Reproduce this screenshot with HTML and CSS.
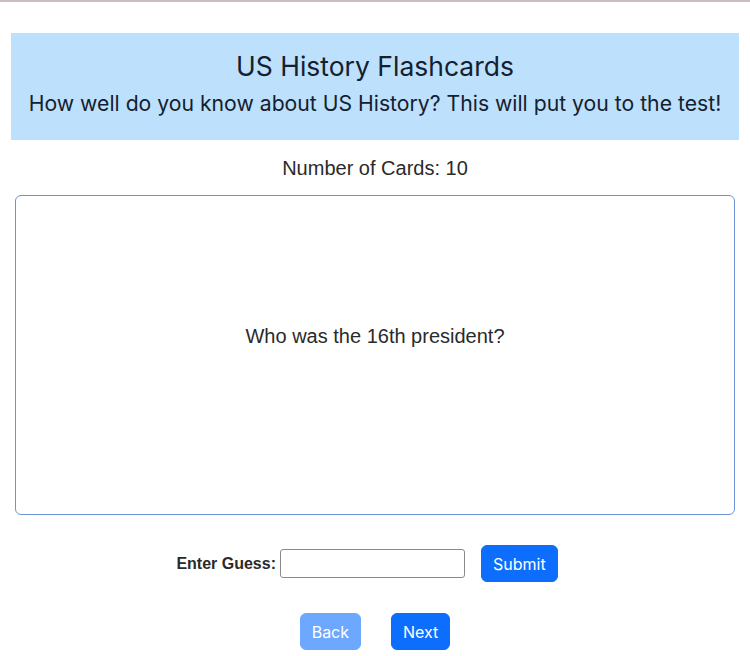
FILE: index.html
```html
<!DOCTYPE html>
<html>
<head>
<meta charset="utf-8">
<link rel="stylesheet" href="styles.css">
</head>
<body>
<div class="page">
  <header class="hero">
    <h1 class="title">US History Flashcards</h1>
    <p class="subtitle">How well do you know about US History? This will put you to the test!</p>
  </header>
  <p class="count">Number of Cards: 10</p>
  <div class="card">
    <p class="question">Who was the 16th president?</p>
  </div>
  <form class="guess">
    <label class="label" for="g">Enter Guess:</label>
    <input class="input" id="g" type="text">
    <button type="button" class="btn">Submit</button>
  </form>
  <div class="nav">
    <button type="button" class="btn btn-disabled">Back</button>
    <button type="button" class="btn">Next</button>
  </div>
</div>
</body>
</html>
```
FILE: styles.css
```css
* { box-sizing: border-box; }
html, body { margin: 0; padding: 0; background: #fff; }
body {
  font-family: Inter, "Liberation Sans", sans-serif;
  color: #212529;
  border-top: 2px solid #cbbcc3;
  height: 656px;
  overflow: hidden;
}
.page {
  padding: 31px 11px 0;
}
.hero {
  background: #bde0fd;
  height: 107px;
  padding-top: 17px;
  text-align: center;
  color: #14202e;
}
.title {
  margin: 0;
  font-size: 26.5px;
  font-weight: 400;
  line-height: 32px;
}
.subtitle {
  margin: 7px 0 0;
  font-size: 21.2px;
  line-height: 28px;
}
.count {
  margin: 15px 0 0;
  text-align: center;
  font-family: "Liberation Sans", Arial, sans-serif;
  font-size: 20px;
  line-height: 26px;
  color: #2a2a2a;
}
.card {
  margin: 14px 4px 0;
  height: 320px;
  padding-bottom: 38px;
  border: 1px solid #6b93d6;
  border-radius: 6px;
  display: flex;
  align-items: center;
  justify-content: center;
}
.question {
  margin: 0;
  font-family: "Liberation Sans", Arial, sans-serif;
  font-size: 20px;
  color: #2a2a2a;
}
.guess {
  margin: 30px 0 0;
  padding-right: 16px;
  display: flex;
  align-items: center;
  justify-content: center;
}
.label {
  font-family: "Liberation Sans", Arial, sans-serif;
  font-weight: 700;
  font-size: 16px;
  color: #2a2a2a;
  margin-right: 4px;
}
.input {
  width: 185px;
  height: 29px;
  border: 1px solid #8a8a8a;
  border-radius: 3px;
  margin-right: 16px;
}
.btn {
  font-family: Inter, "Liberation Sans", sans-serif;
  font-size: 16px;
  line-height: 24px;
  padding: 6px 11px;
  height: 37px;
  color: #fff;
  background: #0d6efd;
  border: 1px solid #0d6efd;
  border-radius: 6px;
}
.btn-disabled {
  background: #6ea8fe;
  border-color: #6ea8fe;
}
.nav {
  margin-top: 31px;
  display: flex;
  justify-content: center;
  gap: 30px;
}
```
